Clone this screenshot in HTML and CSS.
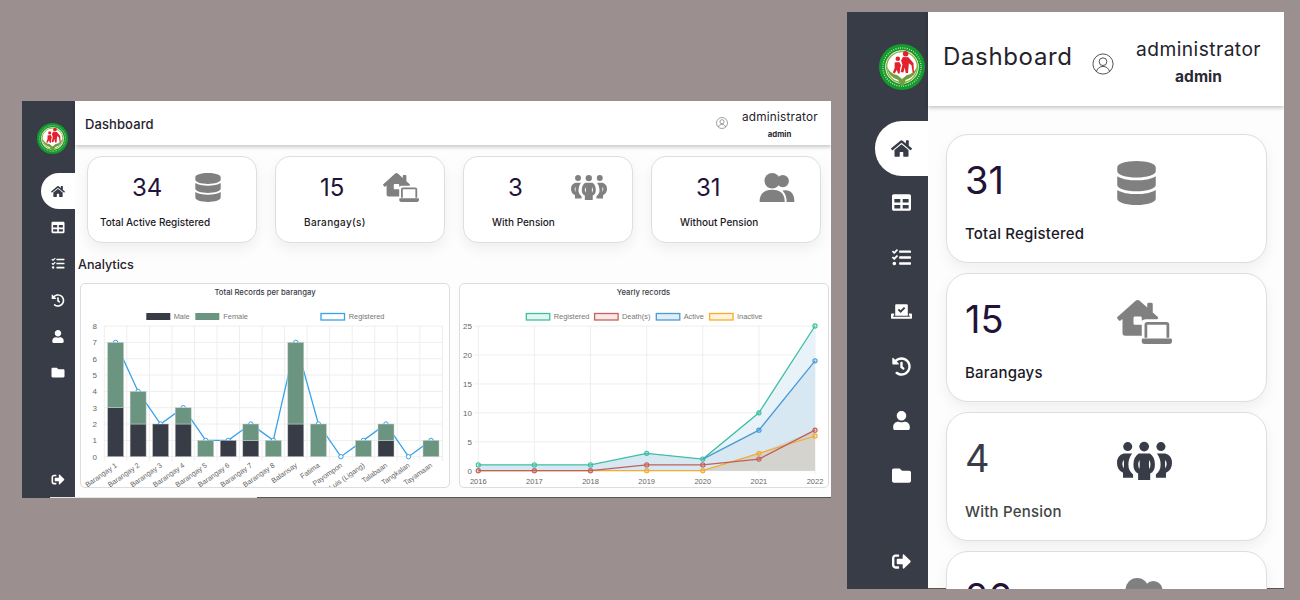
FILE: index.html
```html
<!DOCTYPE html>
<html lang="en">
<head>
<meta charset="utf-8">
<title>Dashboard</title>
<link rel="stylesheet" href="styles.css">
</head>
<body>
<svg class="defs" aria-hidden="true">
  <symbol id="i-home" viewBox="0 0 576 512"><path d="M280.37 148.26L96 300.11V464a16 16 0 0 0 16 16l112.06-.29a16 16 0 0 0 15.92-16V368a16 16 0 0 1 16-16h64a16 16 0 0 1 16 16v95.64a16 16 0 0 0 16 16.05L464 480a16 16 0 0 0 16-16V300L295.67 148.26a12.19 12.19 0 0 0-15.3 0zM571.6 251.47L488 182.56V44.05a12 12 0 0 0-12-12h-56a12 12 0 0 0-12 12v72.61L318.47 43a48 48 0 0 0-61 0L4.34 251.47a12 12 0 0 0-1.6 16.9l25.5 31A12 12 0 0 0 45.15 301l235.22-193.74a12.19 12.19 0 0 1 15.3 0L530.9 301a12 12 0 0 0 16.9-1.6l25.5-31a12 12 0 0 0-1.7-16.93z"/></symbol>
  <symbol id="i-table" viewBox="0 0 512 512"><path d="M464 32H48C21.49 32 0 53.49 0 80v352c0 26.51 21.49 48 48 48h416c26.51 0 48-21.49 48-48V80c0-26.51-21.49-48-48-48zM224 416H64v-96h160v96zm0-160H64v-96h160v96zm224 160H288v-96h160v96zm0-160H288v-96h160v96z"/></symbol>
  <symbol id="i-tasks" viewBox="0 0 512 512"><path d="M139.61 35.5a12 12 0 0 0-17 0L58.93 98.81l-22.7-22.12a12 12 0 0 0-17 0L3.53 92.41a12 12 0 0 0 0 17l47.59 47.4a12.78 12.78 0 0 0 17.61 0l15.59-15.62L156.52 69a12.09 12.09 0 0 0 .09-17zm0 159.19a12 12 0 0 0-17 0l-63.68 63.72-22.7-22.1a12 12 0 0 0-17 0L3.53 252a12 12 0 0 0 0 17L51 316.5a12.77 12.77 0 0 0 17.6 0l15.7-15.69 72.2-72.22a12 12 0 0 0 .09-16.9zM64 368c-26.49 0-48.59 21.5-48.59 48S37.53 464 64 464a48 48 0 0 0 0-96zm432 16H208a16 16 0 0 0-16 16v32a16 16 0 0 0 16 16h288a16 16 0 0 0 16-16v-32a16 16 0 0 0-16-16zm0-320H208a16 16 0 0 0-16 16v32a16 16 0 0 0 16 16h288a16 16 0 0 0 16-16V80a16 16 0 0 0-16-16zm0 160H208a16 16 0 0 0-16 16v32a16 16 0 0 0 16 16h288a16 16 0 0 0 16-16v-32a16 16 0 0 0-16-16z"/></symbol>
  <symbol id="i-vote" viewBox="0 0 640 512"><path d="M608 320h-64v64h22.4c5.3 0 9.6 3.6 9.6 8v16c0 4.4-4.3 8-9.6 8H73.6c-5.3 0-9.6-3.6-9.6-8v-16c0-4.4 4.3-8 9.6-8H96v-64H32c-17.7 0-32 14.3-32 32v96c0 17.7 14.3 32 32 32h576c17.7 0 32-14.3 32-32v-96c0-17.7-14.3-32-32-32zm-96 64V64.3c0-17.9-14.5-32.3-32.3-32.3H160.4C142.5 32 128 46.5 128 64.3V384h384zM211.2 202l25.5-25.3c4.2-4.2 11-4.2 15.2.1l41.3 41.6 95.2-94.4c4.2-4.2 11-4.2 15.2.1l25.3 25.5c4.2 4.2 4.2 11-.1 15.2L300.5 292c-4.2 4.2-11 4.2-15.2-.1l-73.6-74.2c-4.3-4.2-4.2-11 0-15.7z"/></symbol>
  <symbol id="i-history" viewBox="0 0 512 512"><path d="M504 255.531c.253 136.64-111.18 248.372-247.82 248.468-59.015.042-113.223-20.53-155.822-54.911-11.077-8.94-11.905-25.541-1.839-35.607l11.267-11.267c8.609-8.609 22.353-9.551 31.891-1.984C173.062 425.135 212.781 440 256 440c101.705 0 184-82.311 184-184 0-101.705-82.311-184-184-184-48.814 0-93.149 18.969-126.068 49.932l50.754 50.754c10.08 10.08 2.941 27.314-11.313 27.314H24c-8.837 0-16-7.163-16-16V38.627c0-14.254 17.234-21.393 27.314-11.314l49.372 49.372C129.209 34.136 189.552 8 256 8c136.81 0 247.747 110.78 248 247.531zm-180.912 78.784l9.823-12.63c8.138-10.463 6.253-25.542-4.21-33.679L288 256.349V152c0-13.255-10.745-24-24-24h-16c-13.255 0-24 10.745-24 24v135.651l65.409 50.874c10.463 8.137 25.541 6.253 33.679-4.21z"/></symbol>
  <symbol id="i-user" viewBox="0 0 448 512"><path d="M224 256c70.7 0 128-57.3 128-128S294.7 0 224 0 96 57.3 96 128s57.3 128 128 128zm89.6 32h-16.7c-22.2 10.2-46.9 16-72.9 16s-50.6-5.8-72.9-16h-16.7C60.2 288 0 348.2 0 422.4V464c0 26.5 21.5 48 48 48h352c26.5 0 48-21.5 48-48v-41.6c0-74.2-60.2-134.4-134.4-134.4z"/></symbol>
  <symbol id="i-folder" viewBox="0 0 512 512"><path d="M464 128H272l-64-64H48C21.49 64 0 85.49 0 112v288c0 26.51 21.49 48 48 48h416c26.51 0 48-21.49 48-48V176c0-26.51-21.49-48-48-48z"/></symbol>
  <symbol id="i-signout" viewBox="0 0 512 512"><path d="M497 273L329 441c-15 15-41 4.5-41-17v-96H152c-13.3 0-24-10.7-24-24v-96c0-13.3 10.7-24 24-24h136V88c0-21.4 25.9-32 41-17l168 168c9.3 9.4 9.3 24.6 0 34zM192 436v-40c0-6.6-5.4-12-12-12H96c-17.7 0-32-14.3-32-32V160c0-17.7 14.3-32 32-32h84c6.6 0 12-5.4 12-12V76c0-6.6-5.4-12-12-12H96c-53 0-96 43-96 96v192c0 53 43 96 96 96h84c6.6 0 12-5.4 12-12z"/></symbol>
  <symbol id="i-database" viewBox="0 0 448 512"><path d="M448 73.143v45.714C448 159.143 347.667 192 224 192S0 159.143 0 118.857V73.143C0 32.857 100.333 0 224 0s224 32.857 224 73.143zM448 176v102.857C448 319.143 347.667 352 224 352S0 319.143 0 278.857V176c48.125 33.143 136.208 48.572 224 48.572S399.874 209.143 448 176zm0 160v102.857C448 479.143 347.667 512 224 512S0 479.143 0 438.857V336c48.125 33.143 136.208 48.572 224 48.572S399.874 369.143 448 336z"/></symbol>
  <symbol id="i-laptop-house" viewBox="0 0 640 512"><path d="M272 288h-64a16 16 0 0 1-16-16v-64a16 16 0 0 1 16-16h64a16 16 0 0 1 16 16v37.12C299.11 232.24 315 224 332.8 224h136.94l6.65-7.53A16.51 16.51 0 0 0 480 207a16.31 16.31 0 0 0-4.75-10.61L416 144V48a16 16 0 0 0-16-16h-32a16 16 0 0 0-16 16v39.3L263.5 8.92C258 4 247.45 0 240.05 0s-17.93 4-23.47 8.92L4.78 196.42A16.15 16.15 0 0 0 0 207a16.4 16.4 0 0 0 3.55 9.39l18.79 21.31A16.22 16.22 0 0 0 33 242.48 16.51 16.51 0 0 0 42.34 239L64 219.88V384a32 32 0 0 0 32 32h192V288z"/><path fill-rule="evenodd" d="M352 256h224a32 32 0 0 1 32 32v152h-32V288H352v152h-32V288a32 32 0 0 1 32-32z"/><path d="M304 448h320a16 16 0 0 1 16 16v16a32 32 0 0 1-32 32H320a32 32 0 0 1-32-32v-16a16 16 0 0 1 16-16z"/></symbol>
  <symbol id="i-people" viewBox="0 0 164 114"><circle cx="32" cy="14" r="13.5"/><circle cx="81" cy="14" r="14.5"/><circle cx="131" cy="14" r="13.5"/><path fill-rule="evenodd" d="M20 35h25Q34 50 34 68q0 18 14 29v10H18V92Q0 84 0 63 0 41 20 35zM20 53q-8 12 0 26 2-13 0-26z"/><path fill-rule="evenodd" d="M144 35h-25q11 15 11 33 0 18-14 29v10h30V92q18-8 18-29 0-22-20-28zM144 53q8 12 0 26-2-13 0-26z"/><path fill-rule="evenodd" d="M65 35h33q15 10 15 33 0 20-14 26v20H63V94Q49 88 49 68q0-23 16-33zM67 54q-8 13 0 27 2-14 0-27zM96 54q8 13 0 27-2-14 0-27z"/></symbol>
  <symbol id="i-friends" viewBox="0 0 108 90"><circle cx="72" cy="25" r="19"/><path d="M84 90Q84 68 71 54 108 48 108 90z"/><circle cx="39" cy="24" r="24"/><path d="M0 90Q0 52 39 52 78 52 78 90z"/></symbol>
  <symbol id="i-account" viewBox="0 0 24 24"><g fill="none" stroke="currentColor" stroke-width="1"><circle cx="12" cy="12" r="11"/><circle cx="12" cy="9.5" r="4.2"/><path d="M4.8 20c1.4-3.6 4-5.4 7.2-5.4s5.8 1.8 7.2 5.4"/></g></symbol>
  <symbol id="i-logo" viewBox="0 0 100 100">
    <circle cx="50" cy="50" r="50" fill="#159a2d"/>
    <circle cx="50" cy="50" r="41.5" fill="none" stroke="#cfe8b8" stroke-width="3" stroke-dasharray="2 3"/>
    <circle cx="50" cy="50" r="36.5" fill="#fff"/>
    <circle cx="50" cy="50" r="33.5" fill="#fff" stroke="#8db33c" stroke-width="3"/>
    <path fill="#6f9f3f" d="M17 48Q19 72 42 78L47 90H53L58 78Q81 72 83 48 76 66 60 68L50 76 40 68Q24 66 17 48z"/>
    <circle cx="58" cy="21" r="6" fill="#e3202c"/>
    <circle cx="41" cy="32" r="5" fill="#e3202c"/>
    <path fill="#e3202c" d="M52 28l12 1 11 13 1 20h-3l-2-15-6-5-2 21h-5l-2-12-3 11-6-1 4-16-3-9zM34 40l10-1 4 7-2 6-1 12h-4l-2-8-5 8-4-2 4-10z"/>
  </symbol>
</svg>

<section class="window window-small">
  <aside class="rail">
    <div class="rail-logo"><svg class="logo"><use href="#i-logo"/></svg></div>
    <nav class="rail-nav">
      <a class="rail-item is-active"><svg class="ico"><use href="#i-home"/></svg></a>
      <a class="rail-item"><svg class="ico"><use href="#i-table"/></svg></a>
      <a class="rail-item"><svg class="ico"><use href="#i-tasks"/></svg></a>
      <a class="rail-item"><svg class="ico"><use href="#i-history"/></svg></a>
      <a class="rail-item"><svg class="ico"><use href="#i-user"/></svg></a>
      <a class="rail-item"><svg class="ico"><use href="#i-folder"/></svg></a>
    </nav>
    <a class="rail-item rail-out"><svg class="ico"><use href="#i-signout"/></svg></a>
  </aside>
  <main class="main">
    <header class="topbar">
      <h1 class="topbar-title">Dashboard</h1>
      <div class="account">
        <svg class="account-ico"><use href="#i-account"/></svg>
        <div class="account-text">
          <div class="account-name">administrator</div>
          <div class="account-role">admin</div>
        </div>
      </div>
    </header>
    <div class="stats">
      <article class="stat">
        <div class="stat-row"><span class="stat-num">34</span><svg class="stat-ico ico-db"><use href="#i-database"/></svg></div>
        <div class="stat-label stat-label-wide">Total Active Registered</div>
      </article>
      <article class="stat">
        <div class="stat-row"><span class="stat-num">15</span><svg class="stat-ico"><use href="#i-laptop-house"/></svg></div>
        <div class="stat-label stat-label-loose">Barangay(s)</div>
      </article>
      <article class="stat">
        <div class="stat-row"><span class="stat-num">3</span><svg class="stat-ico ico-people"><use href="#i-people"/></svg></div>
        <div class="stat-label">With Pension</div>
      </article>
      <article class="stat">
        <div class="stat-row"><span class="stat-num">31</span><svg class="stat-ico"><use href="#i-friends"/></svg></div>
        <div class="stat-label">Without Pension</div>
      </article>
    </div>
    <h2 class="section-title">Analytics</h2>
    <div class="charts">
      <figure class="chart">
        <svg class="chart-svg" viewBox="0 0 370 205">
          <text class="chart-title" x="185" y="11.5">Total Records per barangay</text>
          <rect x="66.3" y="30" width="24" height="7" fill="#383c46"/>
          <text class="legend" x="93.7" y="36">Male</text>
          <rect x="115.3" y="30" width="24" height="7" fill="#6b9580"/>
          <text class="legend" x="143.3" y="36">Female</text>
          <rect x="241" y="30.5" width="23.5" height="6.5" fill="#fff" stroke="#36a2eb" stroke-width="1.3"/>
          <text class="legend" x="268.7" y="36">Registered</text>
          <g class="grid">
            <path d="M24.3 173.7H362.3M24.3 157.4H362.3M24.3 141H362.3M24.3 124.7H362.3M24.3 108.4H362.3M24.3 92H362.3M24.3 75.7H362.3M24.3 59.4H362.3M24.3 43H362.3"/>
            <path d="M24.3 43V178M46.8 43V178M69.4 43V178M91.9 43V178M114.4 43V178M137 43V178M159.5 43V178M182 43V178M204.6 43V178M227.1 43V178M249.6 43V178M272.2 43V178M294.7 43V178M317.2 43V178M339.8 43V178M362.3 43V178"/>
          </g>
          <g class="axis-y">
            <text x="17" y="176.5">0</text><text x="17" y="160.2">1</text><text x="17" y="143.8">2</text><text x="17" y="127.5">3</text><text x="17" y="111.2">4</text><text x="17" y="94.8">5</text><text x="17" y="78.5">6</text><text x="17" y="62.2">7</text><text x="17" y="45.8">8</text>
          </g>
          <polyline class="line-reg" points="35.6,59.4 58.1,108.4 80.6,141 103.2,124.7 125.7,157.4 148.2,157.4 170.8,141 193.3,157.4 215.8,59.4 238.4,141 260.9,173.7 283.4,157.4 306,141 328.5,173.7 351,157.4"/>
          <g class="dots-reg">
            <circle cx="35.6" cy="59.4" r="2"/><circle cx="58.1" cy="108.4" r="2"/><circle cx="80.6" cy="141" r="2"/><circle cx="103.2" cy="124.7" r="2"/><circle cx="125.7" cy="157.4" r="2"/><circle cx="148.2" cy="157.4" r="2"/><circle cx="170.8" cy="141" r="2"/><circle cx="193.3" cy="157.4" r="2"/><circle cx="215.8" cy="59.4" r="2"/><circle cx="238.4" cy="141" r="2"/><circle cx="260.9" cy="173.7" r="2"/><circle cx="283.4" cy="157.4" r="2"/><circle cx="306" cy="141" r="2"/><circle cx="328.5" cy="173.7" r="2"/><circle cx="351" cy="157.4" r="2"/>
          </g>
          <g class="bars-male">
            <rect x="27.6" y="124.7" width="16" height="49"/><rect x="50.1" y="141" width="16" height="32.7"/><rect x="72.6" y="141" width="16" height="32.7"/><rect x="95.2" y="141" width="16" height="32.7"/><rect x="140.2" y="157.4" width="16" height="16.3"/><rect x="162.8" y="157.4" width="16" height="16.3"/><rect x="207.8" y="141" width="16" height="32.7"/><rect x="298" y="157.4" width="16" height="16.3"/>
          </g>
          <g class="bars-female">
            <rect x="27.6" y="59.4" width="16" height="65.3"/><rect x="50.1" y="108.4" width="16" height="32.6"/><rect x="95.2" y="124.7" width="16" height="16.3"/><rect x="117.7" y="157.4" width="16" height="16.3"/><rect x="162.8" y="141" width="16" height="16.4"/><rect x="185.3" y="157.4" width="16" height="16.3"/><rect x="207.8" y="59.4" width="16" height="81.6"/><rect x="230.4" y="141" width="16" height="32.7"/><rect x="275.4" y="157.4" width="16" height="16.3"/><rect x="298" y="141" width="16" height="16.4"/><rect x="343" y="157.4" width="16" height="16.3"/>
          </g>
          <g class="axis-x">
            <text transform="translate(37.5 183.5) rotate(-35)">Barangay 1</text>
            <text transform="translate(60 183.5) rotate(-35)">Barangay 2</text>
            <text transform="translate(82.5 183.5) rotate(-35)">Barangay 3</text>
            <text transform="translate(105.1 183.5) rotate(-35)">Barangay 4</text>
            <text transform="translate(127.6 183.5) rotate(-35)">Barangay 5</text>
            <text transform="translate(150.1 183.5) rotate(-35)">Barangay 6</text>
            <text transform="translate(172.7 183.5) rotate(-35)">Barangay 7</text>
            <text transform="translate(195.2 183.5) rotate(-35)">Barangay 8</text>
            <text transform="translate(217.7 183.5) rotate(-35)">Balansay</text>
            <text transform="translate(240.3 183.5) rotate(-35)">Fatima</text>
            <text transform="translate(262.8 183.5) rotate(-35)">Payompon</text>
            <text transform="translate(285.3 183.5) rotate(-35)">San Luis (Ligang)</text>
            <text transform="translate(307.9 183.5) rotate(-35)">Talabaan</text>
            <text transform="translate(330.4 183.5) rotate(-35)">Tangkalan</text>
            <text transform="translate(352.9 183.5) rotate(-35)">Tayamaan</text>
          </g>
        </svg>
      </figure>
      <figure class="chart">
        <svg class="chart-svg" viewBox="0 0 370 205">
          <text class="chart-title" x="184.5" y="11.5">Yearly records</text>
          <rect x="67.3" y="30.5" width="23.5" height="6.5" fill="#e4f5f1" stroke="#3dbfa3" stroke-width="1.3"/>
          <text class="legend" x="94.7" y="36">Registered</text>
          <rect x="135.6" y="30.5" width="23.5" height="6.5" fill="#f7e9e8" stroke="#c9605a" stroke-width="1.3"/>
          <text class="legend" x="163" y="36">Death(s)</text>
          <rect x="197.3" y="30.5" width="23.5" height="6.5" fill="#e0eef8" stroke="#4b9bd5" stroke-width="1.3"/>
          <text class="legend" x="224.7" y="36">Active</text>
          <rect x="250.6" y="30.5" width="23.5" height="6.5" fill="#fef3dd" stroke="#f7ac2a" stroke-width="1.3"/>
          <text class="legend" x="278" y="36">Inactive</text>
          <g class="grid">
            <path d="M15 187.7H356M15 158.8H356M15 129.8H356M15 100.9H356M15 71.9H356M15 43H356"/>
            <path d="M19.3 43V191M75.4 43V191M131.5 43V191M187.7 43V191M243.8 43V191M299.9 43V191M356 43V191"/>
          </g>
          <polygon fill="#e8f2f9" points="19.3,187.7 19.3,181.9 75.4,181.9 131.5,181.9 187.7,170.3 243.8,176.1 299.9,129.8 356,43 356,187.7"/>
          <polygon fill="#d8e8f3" points="19.3,187.7 19.3,181.9 75.4,181.9 131.5,181.9 187.7,170.3 243.8,176.1 299.9,147.2 356,77.8 356,187.7"/>
          <polygon fill="#d5d3ce" points="243.8,187.7 299.9,170.3 325,160 356,147.2 356,187.7"/>
          <g class="axis-y axis-y-r">
            <text x="13" y="190.5">0</text><text x="13" y="161.6">5</text><text x="13" y="132.6">10</text><text x="13" y="103.7">15</text><text x="13" y="74.7">20</text><text x="13" y="45.8">25</text>
          </g>
          <g class="axis-x-flat">
            <text x="19.3" y="201">2016</text><text x="75.4" y="201">2017</text><text x="131.5" y="201">2018</text><text x="187.7" y="201">2019</text><text x="243.8" y="201">2020</text><text x="299.9" y="201">2021</text><text x="356" y="201">2022</text>
          </g>
          <g class="series s-reg">
            <polyline points="19.3,181.9 75.4,181.9 131.5,181.9 187.7,170.3 243.8,176.1 299.9,129.8 356,43"/>
            <circle cx="19.3" cy="181.9" r="1.8"/><circle cx="75.4" cy="181.9" r="1.8"/><circle cx="131.5" cy="181.9" r="1.8"/><circle cx="187.7" cy="170.3" r="1.8"/><circle cx="243.8" cy="176.1" r="1.8"/><circle cx="299.9" cy="129.8" r="1.8"/><circle cx="356" cy="43" r="1.8"/>
          </g>
          <g class="series s-act">
            <polyline points="243.8,176.1 299.9,147.2 356,77.8"/>
            <circle cx="299.9" cy="147.2" r="1.8"/><circle cx="356" cy="77.8" r="1.8"/>
          </g>
          <g class="series s-ina">
            <polyline points="19.3,187.7 75.4,187.7 131.5,187.7 187.7,187.7 243.8,187.7 299.9,170.3 356,153"/>
            <circle cx="187.7" cy="187.7" r="1.8"/><circle cx="243.8" cy="187.7" r="1.8"/><circle cx="299.9" cy="170.3" r="1.8"/><circle cx="356" cy="153" r="1.8"/>
          </g>
          <g class="series s-dea">
            <polyline points="19.3,187.7 75.4,187.7 131.5,187.7 187.7,181.9 243.8,181.9 299.9,176.1 356,147.2"/>
            <circle cx="19.3" cy="187.7" r="1.8"/><circle cx="75.4" cy="187.7" r="1.8"/><circle cx="131.5" cy="187.7" r="1.8"/><circle cx="187.7" cy="181.9" r="1.8"/><circle cx="243.8" cy="181.9" r="1.8"/><circle cx="299.9" cy="176.1" r="1.8"/><circle cx="356" cy="147.2" r="1.8"/>
          </g>
        </svg>
      </figure>
    </div>
  </main>
  <div class="window-edge"></div>
</section>

<section class="window window-large">
  <aside class="rail">
    <div class="rail-logo"><svg class="logo"><use href="#i-logo"/></svg></div>
    <nav class="rail-nav">
      <a class="rail-item is-active"><svg class="ico"><use href="#i-home"/></svg></a>
      <a class="rail-item"><svg class="ico"><use href="#i-table"/></svg></a>
      <a class="rail-item"><svg class="ico"><use href="#i-tasks"/></svg></a>
      <a class="rail-item"><svg class="ico"><use href="#i-vote"/></svg></a>
      <a class="rail-item"><svg class="ico"><use href="#i-history"/></svg></a>
      <a class="rail-item"><svg class="ico"><use href="#i-user"/></svg></a>
      <a class="rail-item"><svg class="ico"><use href="#i-folder"/></svg></a>
    </nav>
    <a class="rail-item rail-out"><svg class="ico"><use href="#i-signout"/></svg></a>
  </aside>
  <main class="main">
    <header class="topbar">
      <h1 class="topbar-title">Dashboard</h1>
      <div class="account">
        <svg class="account-ico"><use href="#i-account"/></svg>
        <div class="account-text">
          <div class="account-name">administrator</div>
          <div class="account-role">admin</div>
        </div>
      </div>
    </header>
    <div class="stats">
      <article class="stat">
        <div class="stat-row"><span class="stat-num">31</span><svg class="stat-ico ico-db"><use href="#i-database"/></svg></div>
        <div class="stat-label">Total Registered</div>
      </article>
      <article class="stat">
        <div class="stat-row"><span class="stat-num">15</span><svg class="stat-ico"><use href="#i-laptop-house"/></svg></div>
        <div class="stat-label">Barangays</div>
      </article>
      <article class="stat stat-hover">
        <div class="stat-row"><span class="stat-num">4</span><svg class="stat-ico ico-people"><use href="#i-people"/></svg></div>
        <div class="stat-label">With Pension</div>
      </article>
      <article class="stat">
        <div class="stat-row"><span class="stat-num">26</span><svg class="stat-ico"><use href="#i-friends"/></svg></div>
        <div class="stat-label">Without Pension</div>
      </article>
    </div>
  </main>
</section>
</body>
</html>
```
FILE: styles.css
```css
* { box-sizing: border-box; }
html, body { margin: 0; height: 100%; }
body {
  position: relative;
  width: 1300px;
  height: 600px;
  overflow: hidden;
  background: #9b908f;
  font-family: Inter, "Noto Sans", "Liberation Sans", sans-serif;
  color: #1f1733;
}
.defs { position: absolute; width: 0; height: 0; }
.ico, .stat-ico, .logo, .account-ico { display: block; fill: currentColor; }

.window {
  position: absolute;
  display: flex;
  overflow: hidden;
  background: #fff;
}
.window-small { left: 22px; top: 101px; width: 809px; height: 397px; }
.window-large { left: 847px; top: 12px; width: 437px; height: 577px; }
.window-edge {
  position: absolute;
  left: 28px;
  bottom: 0;
  width: 207px;
  height: 1px;
  background: #e6e4e4;
}

.rail {
  flex: none;
  display: flex;
  flex-direction: column;
  align-items: flex-end;
  background: #383c46;
  color: #fff;
}
.rail-logo { display: flex; justify-content: center; align-items: center; align-self: stretch; }
.rail-nav { display: flex; flex-direction: column; align-self: stretch; align-items: flex-end; }
.rail-item { display: flex; align-items: center; justify-content: center; }
.rail-item.is-active { background: #fff; color: #383c46; }
.rail-out { margin-top: auto; }

.main {
  flex: 1;
  min-width: 0;
  display: flex;
  flex-direction: column;
  background: #fdfdfd;
  border-bottom: 1px solid #5a5656;
}
.topbar {
  flex: none;
  display: flex;
  align-items: center;
  justify-content: space-between;
  background: #fff;
  box-shadow: 0 2px 4px rgba(0, 0, 0, .22);
}
.topbar-title { margin: 0; font-weight: 400; color: #24222c; }
.account { display: flex; align-items: center; }
.account-ico { color: #444; }
.account-text { text-align: center; color: #24222c; }
.account-role { font-weight: 700; color: #2a2a34; }

.stat {
  flex: none;
  display: flex;
  flex-direction: column;
  background: #fff;
  border: 1px solid #dedede;
  box-shadow: 0 6px 14px rgba(0, 0, 0, .06);
}
.stat-row { display: flex; align-items: center; }
.stat-num { flex: none; color: #1f1338; }
.stat-ico { color: #808080; }
.stat-label { font-weight: 500; color: #1c1a26; }
.stat-hover .stat-num, .stat-hover .stat-ico { color: #383c46; }
.stat-hover .stat-label { color: #444; }

/* small window */
.window-small .rail { width: 53px; }
.window-small .rail-logo { height: 72px; padding: 2px 0 0 7px; }
.window-small .logo { width: 31px; height: 31px; }
.window-small .rail-nav .rail-item { height: 36.3px; width: 34px; }
.window-small .rail-item.is-active { border-radius: 18px 0 0 18px; }
.window-small .rail-item .ico { width: 14px; height: 13px; }
.window-small .rail-out { height: 38px; width: 34px; }
.window-small .topbar { height: 44px; padding: 0 14px 0 10px; }
.window-small .topbar-title { font-size: 13px; letter-spacing: .1px; font-weight: 500; margin-top: 1px; }
.window-small .account-ico { width: 12px; height: 12px; }
.window-small .account-text { width: 75px; margin: 3px 0 0 14px; }
.window-small .account-name { font-size: 11.8px; line-height: 16px; letter-spacing: .2px; }
.window-small .account-role { font-size: 7.8px; line-height: 14px; margin-top: 2px; }
.window-small .stats { display: flex; gap: 18px; padding: 11px 0 0 12px; }
.window-small .stat { width: 170px; height: 87px; border-radius: 15px; padding-top: 14px; }
.window-small .stat-row { height: 32px; padding-left: 44px; }
.window-small .stat-num { width: 63px; font-size: 24px; }
.window-small .stat-ico { width: 36px; height: 29px; }
.window-small .ico-db { width: 26px; height: 29px; }
.window-small .stat-label { font-size: 10px; line-height: 16px; margin: 11px 0 0 28px; }
.window-small .stat-label-wide { margin-left: 12px; }
.window-small .stat-label-loose { letter-spacing: .35px; }
.window-small .section-title { margin: 14px 0 10px 3px; font-size: 12.6px; line-height: 16px; font-weight: 500; color: #24222c; }
.window-small .charts { display: flex; gap: 9px; padding-left: 5px; }
.chart {
  flex: none;
  margin: 0;
  width: 370px;
  height: 205px;
  background: #fff;
  border: 1px solid #ddd;
  border-radius: 5px;
  overflow: hidden;
}
.chart-svg { display: block; width: 370px; height: 205px; margin: -1px; }
.chart-title { font-size: 7.7px; font-weight: 500; text-anchor: middle; fill: #3a3a48; }
.chart-svg text { font-family: "Liberation Sans", Arial, sans-serif; }
.chart-svg .chart-title { font-family: Inter, "Liberation Sans", sans-serif; }
.legend { font-size: 7.4px; fill: #777; }
.grid path { fill: none; stroke: #eeeeee; stroke-width: 1; }
.axis-y text { font-size: 8px; fill: #666; text-anchor: end; }
.axis-x text { font-size: 7.2px; fill: #666; text-anchor: end; }
.axis-x-flat text { font-size: 7.5px; fill: #666; text-anchor: middle; }
.line-reg { fill: none; stroke: #36a2eb; stroke-width: 1.3; }
.dots-reg circle { r: 2.2px; fill: #fff; stroke: #36a2eb; stroke-width: 1; }
.bars-male rect { fill: #383c46; stroke: #c9c9c9; stroke-width: .5; }
.bars-female rect { fill: #6b9580; stroke: #c5d5cc; stroke-width: .5; }
.series polyline { fill: none; stroke-width: 1.3; }
.series circle { r: 2.1px; fill-opacity: .25; stroke-width: 1.1; }
.s-reg polyline, .s-reg circle { stroke: #3dbfa3; }
.s-reg circle { fill: #3dbfa3; }
.s-act polyline, .s-act circle { stroke: #4b9bd5; }
.s-act circle { fill: #4b9bd5; }
.s-ina polyline, .s-ina circle { stroke: #f0ac35; }
.s-ina circle { fill: #f0ac35; }
.s-dea polyline, .s-dea circle { stroke: #c0605a; }
.s-dea circle { fill: #c0605a; }

/* large window */
.window-large .rail { width: 81px; }
.window-large .rail-logo { height: 109px; padding-left: 29px; }
.window-large .logo { width: 46px; height: 46px; }
.window-large .rail-nav .rail-item { height: 54.5px; width: 53px; }
.window-large .rail-item.is-active { border-radius: 27px 0 0 27px; }
.window-large .rail-item .ico { width: 21px; height: 19px; }
.window-large .rail-out { height: 56px; width: 53px; }
.window-large .topbar { height: 94px; padding: 0 23px 0 15px; }
.window-large .topbar-title { font-size: 24px; letter-spacing: .65px; margin-top: -6px; }
.window-large .account-ico { width: 22px; height: 22px; margin-top: 10px; }
.window-large .account-text { width: 125px; margin: 5px 0 0 22px; }
.window-large .account-name { font-size: 19.2px; line-height: 24px; letter-spacing: .45px; }
.window-large .account-role { font-size: 15.5px; line-height: 20px; margin-top: 6px; }
.window-large .stats { display: flex; flex-direction: column; gap: 10px; padding: 28px 0 0 18px; }
.window-large .stat { width: 321px; height: 129px; border-radius: 22px; padding-top: 26px; }
.window-large .stat-row { height: 44px; padding-left: 18px; }
.window-large .stat-num { width: 152px; font-size: 38px; margin-top: -6px; }
.window-large .stat-ico { width: 55px; height: 44px; }
.window-large .ico-db { width: 39px; height: 44px; }
.window-large .stat-label { font-size: 15px; line-height: 20px; margin: 19px 0 0 18px; letter-spacing: .2px; }
```
